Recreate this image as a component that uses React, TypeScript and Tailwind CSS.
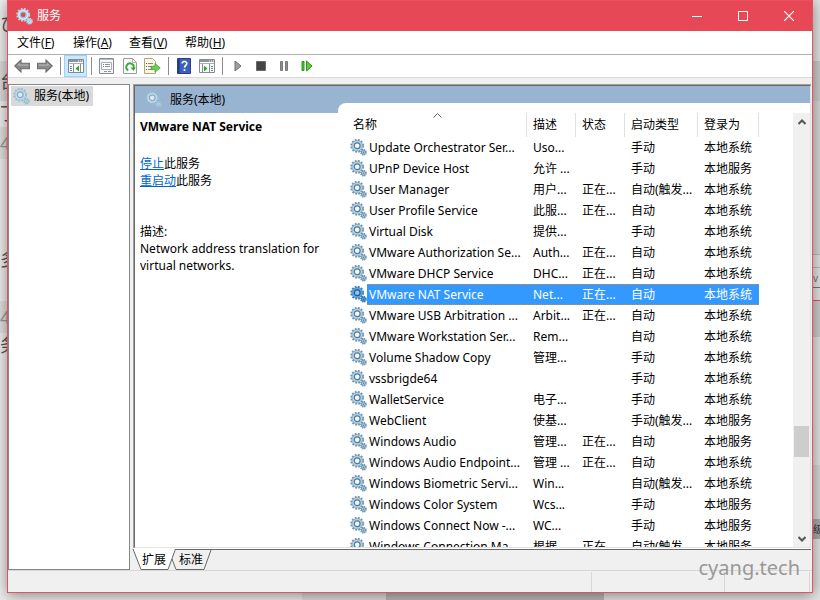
import { useState } from 'react';
import type { ReactNode } from 'react';
import clsx from 'clsx';

type Service = {
  name: string;
  desc: string;
  status?: string;
  start: string;
  logon: string;
};

const SERVICES: Service[] = [
  { name: 'Update Orchestrator Ser...', desc: 'Uso...', start: '手动', logon: '本地系统' },
  { name: 'UPnP Device Host', desc: '允许 ...', start: '手动', logon: '本地服务' },
  { name: 'User Manager', desc: '用户...', status: '正在...', start: '自动(触发...', logon: '本地系统' },
  { name: 'User Profile Service', desc: '此服...', status: '正在...', start: '自动', logon: '本地系统' },
  { name: 'Virtual Disk', desc: '提供...', start: '手动', logon: '本地系统' },
  { name: 'VMware Authorization Se...', desc: 'Auth...', status: '正在...', start: '自动', logon: '本地系统' },
  { name: 'VMware DHCP Service', desc: 'DHC...', status: '正在...', start: '自动', logon: '本地系统' },
  { name: 'VMware NAT Service', desc: 'Net...', status: '正在...', start: '自动', logon: '本地系统' },
  { name: 'VMware USB Arbitration ...', desc: 'Arbit...', status: '正在...', start: '自动', logon: '本地系统' },
  { name: 'VMware Workstation Ser...', desc: 'Rem...', start: '自动', logon: '本地系统' },
  { name: 'Volume Shadow Copy', desc: '管理...', start: '手动', logon: '本地系统' },
  { name: 'vssbrigde64', desc: '', start: '手动', logon: '本地系统' },
  { name: 'WalletService', desc: '电子...', start: '手动', logon: '本地系统' },
  { name: 'WebClient', desc: '使基...', start: '手动(触发...', logon: '本地服务' },
  { name: 'Windows Audio', desc: '管理...', status: '正在...', start: '自动', logon: '本地服务' },
  { name: 'Windows Audio Endpoint...', desc: '管理 ...', status: '正在...', start: '自动', logon: '本地系统' },
  { name: 'Windows Biometric Servi...', desc: 'Win...', start: '自动(触发...', logon: '本地系统' },
  { name: 'Windows Color System', desc: 'Wcs...', start: '手动', logon: '本地服务' },
  { name: 'Windows Connect Now -...', desc: 'WC...', start: '手动', logon: '本地服务' },
  { name: 'Windows Connection Ma...', desc: '根据...', status: '正在...', start: '自动(触发...', logon: '本地服务' },
];

const MENUS = [
  { label: '文件', key: 'F' },
  { label: '操作', key: 'A' },
  { label: '查看', key: 'V' },
  { label: '帮助', key: 'H' },
];

// [teeth, body, rim, hole]
const GEAR_COLORS = {
  list: ['#7396b0', '#b4d5ea', '#527996', '#f4f9fc'],
  light: ['#9dbbd0', '#bfdff2', '#86a9c0', '#dfe8ee'],
  title: ['#b5d6e4', '#cdeefa', '#8fc0d4', '#e74856'],
  selected: ['#3a7db8', '#62a8e6', '#24588c', '#8cc4f5'],
};

function GearIcon({ variant = 'list' }: { variant?: keyof typeof GEAR_COLORS }) {
  const [teeth, body, rim, hole] = GEAR_COLORS[variant];
  return (
    <svg viewBox="0 0 17 17" className="h-[17px] w-[17px] shrink-0" aria-hidden="true">
      <circle cx="7.2" cy="6.800" r="6" fill="none" stroke={teeth} strokeWidth="1.9" strokeDasharray="1.8 1.342" />
      <circle cx="7.2" cy="6.800" r="5.300" fill={body} stroke={teeth} strokeWidth="0.7" />
      <circle cx="7.2" cy="6.800" r="2.900" fill={hole} stroke={rim} strokeWidth="1.200" />
      <circle cx="13.5" cy="13.200" r="2.6" fill={body} stroke={teeth} strokeWidth="1.6" strokeDasharray="1.2 0.84" />
      <circle cx="13.5" cy="13.200" r="1.900" fill={body} stroke={rim} strokeWidth="0.6" />
      <circle cx="13.5" cy="13.200" r="0.7" fill={rim} />
    </svg>
  );
}

function ArrowIcon({ flip }: { flip?: boolean }) {
  return (
    <svg viewBox="0 0 16 14" className={clsx('h-[14px] w-4', flip && '-scale-x-100')}>
      <path d="M.8 7 7 1v3.3h8.4v5.4H7V13z" fill="#8a8a8a" stroke="#6e6e6e" strokeWidth="1.1" />
      <path d="M3 6.6 6 3.8v1.6h8.3v1.4z" fill="#b4b4b4" />
    </svg>
  );
}

// Console window with a tree pane; the pane sits left or right
function PaneIcon({ side }: { side: 'left' | 'right' }) {
  return (
    <svg viewBox="0 0 16 14" className="h-[14px] w-4">
      <path d="M.5.5h15v13H.5z" fill="#fff" stroke="#858b91" />
      <path d="M1 1h14v2H1z" fill="#8d949b" />
      <path d="M10 1.5h1v1h-1zM12 1.5h1v1h-1zM14 1.5h1v1h-1z" fill="#fff" />
      <path d="M1 4.5h14" stroke="#a9aeb3" />
      {side === 'left' ? (
        <>
          <path d="M5.5 5v8.5" stroke="#858b91" />
          <path d="M2 7.5h2M2 9.5h2M2 11.5h2" stroke="#4c83b5" />
          <path d="M7.5 9.5 11 6.5v6z" fill="#2da52d" />
          <path d="M12.5 5v8.5" stroke="#858b91" />
        </>
      ) : (
        <>
          <path d="M10.5 5v8.5" stroke="#858b91" />
          <path d="M12 7.5h2M12 9.5h2M12 11.5h2" stroke="#4c83b5" />
          <path d="M8.5 9.5 5 6.5v6z" fill="#2da52d" />
          <path d="M3.5 5v8.5" stroke="#858b91" />
        </>
      )}
    </svg>
  );
}

function PropertiesIcon() {
  return (
    <svg viewBox="0 0 15 16" className="h-4 w-[15px]">
      <path d="M.5.5h14v15H.5z" fill="#f6f6f6" stroke="#858b91" />
      <path d="M1 1.5h13" stroke="#b7bcc1" />
      <path d="M2.5 4.5h10v7h-10z" fill="#fff" stroke="#a9aeb3" />
      <path d="M4 6.5h1M4 8.5h1" stroke="#4c83b5" />
      <path d="M6 6.5h5M6 8.5h5" stroke="#8d949b" />
      <path d="M5 13.5h3M9 13.5h3" stroke="#8d949b" />
    </svg>
  );
}

function RefreshIcon() {
  return (
    <svg viewBox="0 0 14 16" className="h-4 w-[14px]">
      <path d="M.5.5h9l4 4v11H.5z" fill="#fdfdfd" stroke="#9a9a9a" />
      <path d="M9.5.5v4h4" fill="none" stroke="#b5b5b5" />
      <path d="M5.3 12.4A3.7 3.7 0 1 1 10.6 10" fill="none" stroke="#35a835" strokeWidth="1.9" />
      <path d="M7.6 9.4h5.2l-2.4 3.6z" fill="#35a835" />
    </svg>
  );
}

function ExportIcon() {
  return (
    <svg viewBox="0 0 17 16" className="h-4 w-[17px]">
      <path d="M.5.5h8l3 3v12H.5z" fill="#fbf6e0" stroke="#b0a581" />
      <path d="M2 5.5h1M2 8.5h1M2 11.5h1" stroke="#555" />
      <path d="M4 5.5h5M4 8.5h4M4 11.5h5" stroke="#8a8a8a" />
      <path d="M7 8.3h4V5.4l5.2 4.4-5.2 4.4v-2.900H7z" fill="#6fd050" stroke="#3b9c28" strokeWidth="0.7" />
    </svg>
  );
}

function HelpIcon() {
  return (
    <svg viewBox="0 0 14 16" className="h-4 w-[14px]">
      <path d="M.5.5h13v15H.5z" fill="#3a5fc0" stroke="#2c3f86" />
      <path d="M1 1h1.5v14H1z" fill="#24387c" />
      <path d="M5.2 5.6c0-3 4.8-2.8 4.6 0-.1 1.7-2.2 1.9-2.3 4" fill="none" stroke="#fff" strokeWidth="1.6" />
      <path d="M6.6 11.2h1.8V13H6.6z" fill="#fff" />
    </svg>
  );
}

function PlayIcon() {
  return (
    <svg viewBox="0 0 8 12" className="h-3 w-2">
      <path d="M1 1v10l6-5z" fill="#a0a0a0" stroke="#6e6e6e" />
    </svg>
  );
}

function StopIcon() {
  return (
    <svg viewBox="0 0 10 10" className="h-[10px] w-[10px]">
      <path d="M.5.5h9v9h-9z" fill="#444" stroke="#6a6a6a" />
    </svg>
  );
}

function PauseIcon() {
  return (
    <svg viewBox="0 0 8 10" className="h-[10px] w-2">
      <path d="M.5.5h2v9h-2zM5.5.5h2v9h-2z" fill="#8e8e8e" stroke="#7a7a7a" />
    </svg>
  );
}

function RestartIcon() {
  return (
    <svg viewBox="0 0 12 12" className="h-3 w-3">
      <path d="M1 1.5h2v9H1z" fill="#55c238" stroke="#2f9420" />
      <path d="M5.5 1v10L11 6z" fill="#55d238" stroke="#2f9420" />
    </svg>
  );
}

function ToolButton({ label, active, children }: { label: string; active?: boolean; children: ReactNode }) {
  return (
    <button
      type="button"
      aria-label={label}
      className={clsx(
        'flex h-[22px] w-[23px] items-center justify-center border',
        active ? 'border-[#99d1ff] bg-[#cce8ff]' : 'border-transparent'
      )}
    >
      {children}
    </button>
  );
}

function ToolSeparator() {
  return (
    <div className="flex w-2 justify-center">
      <div className="h-[18px] w-px bg-[#8d8d8d]" />
    </div>
  );
}

function TitleBar() {
  return (
    <header className="flex h-[30px] shrink-0 items-center bg-[#e74856] pl-2 text-white">
      <GearIcon variant="title" />
      <h1 className="flex-1 pl-1">服务</h1>
      <button type="button" aria-label="最小化" className="flex h-full w-[46px] items-center justify-center">
        <svg viewBox="0 0 10 10" className="h-[10px] w-[10px]" stroke="#fff">
          <path d="M0 5.5h10" />
        </svg>
      </button>
      <button type="button" aria-label="最大化" className="flex h-full w-[46px] items-center justify-center">
        <svg viewBox="0 0 10 10" className="h-[10px] w-[10px]" stroke="#fff" fill="none">
          <path d="M.5.5h9v9h-9z" />
        </svg>
      </button>
      <button type="button" aria-label="关闭" className="flex h-full w-[46px] items-center justify-center">
        <svg viewBox="0 0 10 10" className="h-[10px] w-[10px]" stroke="#fff" strokeWidth="1.2">
          <path d="m0 0 10 10M10 0 0 10" />
        </svg>
      </button>
    </header>
  );
}

function MenuBar() {
  return (
    <nav className="flex h-6 shrink-0 items-center border-b border-[#b0b0b0] bg-white pl-px">
      {MENUS.map((menu) => (
        <button key={menu.key} type="button" className="w-14 pl-2 text-left">
          {menu.label}(<span className="underline">{menu.key}</span>)
        </button>
      ))}
    </nav>
  );
}

function Toolbar() {
  return (
    <div role="toolbar" className="flex h-[23px] shrink-0 items-center border-b border-[#d9d9d9] bg-white pl-[2px]">
      <ToolButton label="后退"><ArrowIcon /></ToolButton>
      <ToolButton label="前进"><ArrowIcon flip /></ToolButton>
      <ToolSeparator />
      <ToolButton label="显示控制台树" active><PaneIcon side="left" /></ToolButton>
      <ToolSeparator />
      <ToolButton label="属性"><PropertiesIcon /></ToolButton>
      <ToolButton label="刷新"><RefreshIcon /></ToolButton>
      <ToolButton label="导出列表"><ExportIcon /></ToolButton>
      <ToolSeparator />
      <ToolButton label="帮助"><HelpIcon /></ToolButton>
      <ToolButton label="显示操作窗格"><PaneIcon side="right" /></ToolButton>
      <ToolSeparator />
      <ToolButton label="启动服务"><PlayIcon /></ToolButton>
      <ToolButton label="停止服务"><StopIcon /></ToolButton>
      <ToolButton label="暂停服务"><PauseIcon /></ToolButton>
      <ToolButton label="重启动服务"><RestartIcon /></ToolButton>
    </div>
  );
}

function Details() {
  return (
    <section className="flex w-[203px] shrink-0 flex-col">
      <div className="flex h-[27px] shrink-0 items-center gap-2 bg-[#99b4d1] pl-[10px]">
        <GearIcon variant="light" />
        <span>服务(本地)</span>
      </div>
      <div className="pt-[5px] pl-[5px] leading-[17px]">
        <h2 className="font-bold">VMware NAT Service</h2>
        <p className="pt-5"><a href="#stop" className="text-[#0066cc] underline">停止</a>此服务</p>
        <p><a href="#restart" className="text-[#0066cc] underline">重启动</a>此服务</p>
        <p className="pt-[34px]">描述:</p>
        <p>Network address translation for virtual networks.</p>
      </div>
    </section>
  );
}

function ServiceTable() {
  const [selected, setSelected] = useState('VMware NAT Service');
  const th = 'relative border-r border-[#e0e0e0] pl-[6px] text-left font-normal';
  const highlight = 'border-y border-dotted border-[#c98a4a] bg-[#3399ff] text-white';

  return (
    <table className="w-[412px] table-fixed border-separate border-spacing-0 whitespace-nowrap">
      <colgroup>
        <col className="w-[180px]" />
        <col className="w-[49px]" />
        <col className="w-[49px]" />
        <col className="w-[73px]" />
        <col className="w-[61px]" />
      </colgroup>
      <thead>
        <tr className="h-6">
          <th className={th}>
            名称
            <svg viewBox="0 0 9 5" className="absolute top-0 left-[86px] h-[5px] w-[9px]" fill="none" stroke="#606060">
              <path d="M.5 4.5l4-4 4 4" />
            </svg>
          </th>
          <th className={th}>描述</th>
          <th className={th}>状态</th>
          <th className={th}>启动类型</th>
          <th className={th}>登录为</th>
        </tr>
      </thead>
      <tbody>
        {SERVICES.map((s) => {
          const active = s.name === selected;
          const cell = clsx('p-0 pl-[6px]', active && highlight);
          return (
            <tr key={s.name} className="h-[21px]" onClick={() => setSelected(s.name)}>
              <td className="p-0 pl-[3px]">
                <div className="flex h-[21px] items-center">
                  <GearIcon variant={active ? 'selected' : 'list'} />
                  <span className={clsx('flex h-full flex-1 items-center pl-[2px]', active && highlight)}>
                    {s.name}
                  </span>
                </div>
              </td>
              <td className={cell}>{s.desc}</td>
              <td className={cell}>{s.status}</td>
              <td className={cell}>{s.start}</td>
              <td className={cell}>{s.logon}</td>
            </tr>
          );
        })}
      </tbody>
    </table>
  );
}

function ScrollBar() {
  return (
    <div className="flex w-[17px] shrink-0 flex-col items-center bg-[#f0f0f0]">
      <button type="button" aria-label="向上滚动" className="flex h-[17px] w-full shrink-0 items-center justify-center">
        <svg viewBox="0 0 8 6" className="h-[6px] w-2" fill="none" stroke="#555" strokeWidth="2">
          <path d="M.5 5 4 1.5 7.5 5" />
        </svg>
      </button>
      <div className="grow-[296]" />
      <div className="h-[31px] w-[15px] bg-[#cdcdcd]" />
      <div className="grow-[73]" />
      <button type="button" aria-label="向下滚动" className="flex h-[17px] w-full shrink-0 items-center justify-center">
        <svg viewBox="0 0 8 6" className="h-[6px] w-2" fill="none" stroke="#555" strokeWidth="2">
          <path d="M.5 1 4 4.5 7.5 1" />
        </svg>
      </button>
    </div>
  );
}

function ViewTabs() {
  return (
    <div className="flex h-[21px] shrink-0">
      <button type="button" className="relative h-full w-[42px] pl-[9px] text-left">
        <svg viewBox="0 0 42 21" className="absolute inset-0 h-full w-full overflow-visible">
          <path d="M0 0 8 20.500H35L42.500 0" fill="#fff" stroke="#696969" />
        </svg>
        <span className="relative">扩展</span>
      </button>
      <div className="flex flex-1 border-t border-[#696969]">
        <button type="button" className="relative h-full w-[36px] pl-1 text-left">
          <svg viewBox="0 0 36 20" className="absolute inset-0 h-full w-full overflow-visible" fill="none" stroke="#696969">
            <path d="M-3 9 1 19.500H29L36 0" />
          </svg>
          <span className="relative">标准</span>
        </button>
      </div>
    </div>
  );
}

function ServicesWindow() {
  return (
    <main className="relative flex min-w-0 flex-1 flex-col border border-[#e8505e] bg-[#f0f0f0] shadow-[0_2px_14px_rgba(0,0,0,0.45)]">
      <TitleBar />
      <MenuBar />
      <Toolbar />
      <div className="flex min-h-0 flex-1 pt-[6px]">
        <aside className="w-[122px] shrink-0 border border-[#828790] bg-white px-[2px] pt-px">
          <button type="button" className="flex h-5 items-center gap-1 bg-[#d9d9d9] pr-1 pl-[2px]">
            <GearIcon variant="light" />
            <span>服务(本地)</span>
          </button>
        </aside>
        <div className="flex min-w-0 flex-1 flex-col pr-px pl-[3px]">
          <div className="flex min-h-0 flex-1 border-t border-l border-[#a0a0a0]">
            <div className="flex min-w-0 flex-1 border-t border-r border-b border-l border-t-[#696969] border-r-[#e3e3e3] border-b-[#e3e3e3] border-l-[#696969] bg-white">
              <Details />
              <section className="flex min-w-0 flex-1 bg-[#99b4d1] pt-[17px]">
                <div className="flex min-w-0 flex-1 rounded-tl-lg bg-white pt-[10px] pl-[9px]">
                  <div className="min-w-0 flex-1 overflow-hidden">
                    <ServiceTable />
                  </div>
                  <ScrollBar />
                </div>
              </section>
            </div>
          </div>
          <div className="h-px shrink-0 bg-white" />
          <ViewTabs />
        </div>
      </div>
      <footer className="flex h-[22px] shrink-0 border-t border-[#d7d7d7] pt-px">
        <div className="flex-1 border-r border-[#d7d7d7]" />
        <div className="w-[133px] border-r border-[#d7d7d7]" />
        <div className="mr-[2px] w-[85px] border-r border-[#d7d7d7]" />
      </footer>
      <div className="pointer-events-none absolute right-3 bottom-[10px] text-xl leading-7 text-[#999]">cyang.tech</div>
    </main>
  );
}

// Slivers of the page that shows behind the window
function LeftEdge() {
  return (
    <div className="flex w-[7px] shrink-0 flex-col overflow-hidden bg-[#f0f0f0] text-lg leading-6 whitespace-nowrap text-[#555]">
      <div className="h-[61px] pt-3">ひ</div>
      <div className="h-10 bg-[#dcdcdc] pt-2">台</div>
      <div className="h-[26px]">丁</div>
      <div className="h-8 bg-[#e2e2e2] pt-1 text-[#999]">4</div>
      <div className="h-[142px] pt-[88px]">多</div>
      <div className="h-8 bg-[#e2e2e2] pt-1 text-[#999]">4</div>
      <div className="h-8">务</div>
    </div>
  );
}

function RightEdge() {
  return (
    <div className="flex w-[7px] shrink-0 flex-col overflow-hidden bg-[#e4e4e4] text-[10px] leading-5 whitespace-nowrap text-[#333]">
      <div className="h-[61px]" />
      <div className="h-10 bg-[#cdcdcd]" />
      <div className="h-[154px] border-b border-[#bbb] bg-[#d8d8d8]" />
      <div className="h-[13px] border-b border-[#bbb]" />
      <div className="h-5 border-b border-[#777] text-[#777]">v</div>
      <div className="h-3" />
      <div className="h-px bg-[#e8505e]" />
      <div className="h-9 bg-[#cdcdcd]" />
      <div className="h-32" />
      <div className="h-[54px] bg-[#d8d8d8]" />
      <div className="h-5 bg-[#aaa]">级</div>
    </div>
  );
}

export default function App() {
  return (
    <div className="flex h-screen flex-col overflow-hidden bg-[#ececec] font-['Noto_Sans','Noto_Sans_CJK_SC',sans-serif] text-xs text-black select-none">
      <div className="flex min-h-0 flex-1">
        <LeftEdge />
        <ServicesWindow />
        <RightEdge />
      </div>
      <div className="flex h-[7px] shrink-0">
        <div className="w-[302px] bg-[#ececec]" />
        <div className="w-[84px] bg-[#dcdcdc]" />
        <div className="w-[218px] bg-[#b8b8b8]" />
        <div className="flex-1 bg-[#e4e4e4]" />
      </div>
    </div>
  );
}
